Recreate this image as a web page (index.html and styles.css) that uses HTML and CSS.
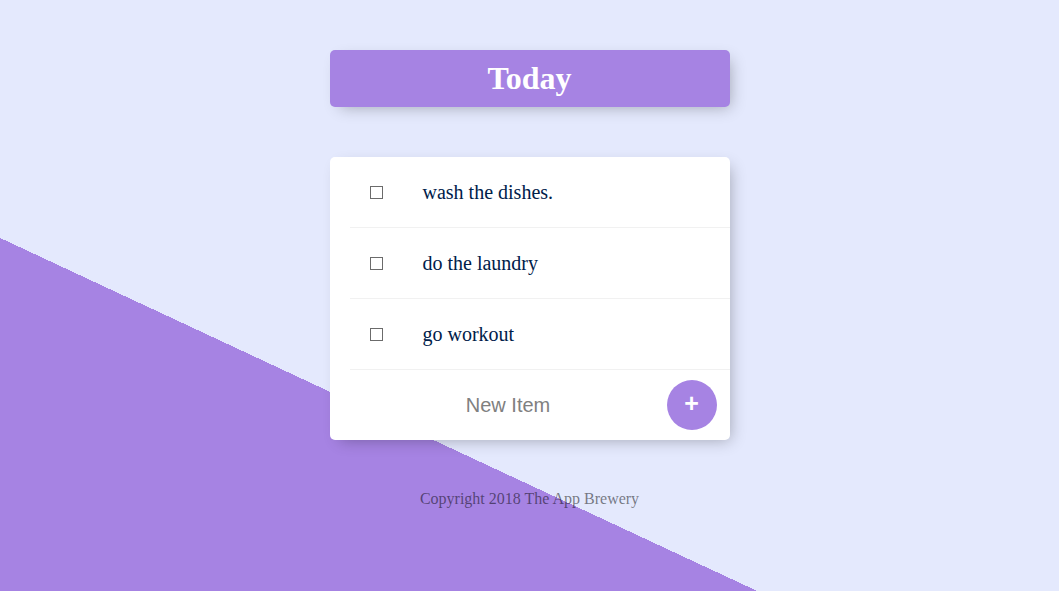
FILE: index.html
```html
<!DOCTYPE html>
<html lang="en">
<head>
<meta charset="utf-8">
<title>To-Do List</title>
<link rel="stylesheet" href="styles.css">
</head>
<body>
  <div class="box heading">
    <h1 class="title">Today</h1>
  </div>
  <div class="box">
    <form class="list">
      <div class="item">
        <input class="check" type="checkbox">
        <p class="item-text">wash the dishes.</p>
      </div>
      <div class="item">
        <input class="check" type="checkbox">
        <p class="item-text">do the laundry</p>
      </div>
      <div class="item">
        <input class="check" type="checkbox">
        <p class="item-text">go workout</p>
      </div>
    </form>
    <form class="item new-item">
      <input class="new-input" type="text" name="newItem" placeholder="New Item" autocomplete="off">
      <button class="add-btn" type="button">+</button>
    </form>
  </div>
  <footer class="footer">Copyright 2018 The App Brewery</footer>
</body>
</html>
```

FILE: styles.css
```css
html {
  height: 100%;
  background-color: #E4E9FD;
  background-image: linear-gradient(25deg, #A683E3 320px, #E4E9FD 320px);
  font-family: "Liberation Serif", "Times New Roman", serif;
}

body {
  margin: 0;
  padding-top: 50px;
}

.box {
  max-width: 400px;
  margin: 0 auto 50px;
  background: #ffffff;
  border-radius: 5px;
  box-shadow: 5px 5px 15px -5px rgba(0, 0, 0, 0.3);
}

.heading {
  background-color: #A683E3;
  text-align: center;
}

.title {
  margin: 0;
  padding: 10px;
  color: #ffffff;
  font-size: 32px;
  font-weight: bold;
}

.list {
  margin-left: 20px;
}

.item {
  min-height: 70px;
  display: flex;
  align-items: center;
  border-bottom: 1px solid #F1F1F1;
}

.check {
  -webkit-appearance: none;
  appearance: none;
  margin: 20px;
  width: 13px;
  height: 13px;
  border: 1px solid #6b6b6b;
  border-radius: 0;
  background: #ffffff;
}

.item-text {
  margin: 0;
  padding: 20px;
  font-size: 20px;
  font-weight: 200;
  color: #00204a;
}

.new-item {
  margin-left: 20px;
  border-bottom: 0;
  justify-content: flex-start;
}

.new-input {
  text-align: center;
  height: 60px;
  border: none;
  background: transparent;
  font-family: "Liberation Sans", Arial, sans-serif;
  font-size: 20px;
  font-weight: 200;
  width: 317px;
  padding: 0;
  margin: 0;
}

.new-input::placeholder {
  color: grey;
  opacity: 1;
}

.new-input:focus {
  outline: none;
}

.add-btn {
  display: flex;
  align-items: center;
  justify-content: center;
  height: 50px;
  width: 50px;
  border-radius: 50%;
  border: 0;
  background-color: #A683E3;
  color: #ffffff;
  font-family: "Liberation Sans", Arial, sans-serif;
  font-size: 25px;
  font-weight: bold;
  padding: 0 0 4px;
  margin: 0;
  line-height: 1;
}

.footer {
  color: rgba(0, 0, 0, 0.5);
  text-align: center;
  font-size: 16px;
}
```
